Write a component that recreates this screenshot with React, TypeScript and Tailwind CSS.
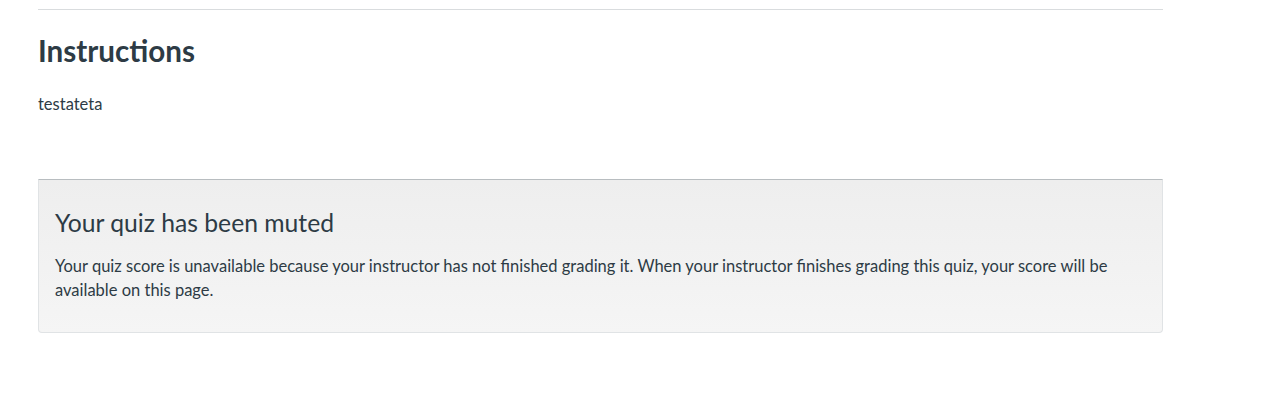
export default function App() {
  return (
    <div className="w-[1280px] h-[417px] bg-white text-[#2d3b45]" style={{ fontFamily: "Lato, 'Open Sans', sans-serif" }}>
      <div className="ml-[38px] w-[1125px] pt-[9px]">
        <div className="h-px bg-[#d9dcde]" />
        <h2 className="mt-[23px] text-[29.6px] leading-[36px] font-bold">Instructions</h2>
        <p className="mt-[23px] text-[16.5px] leading-[24px]">testateta</p>
        <div className="mt-[63px] rounded-b-[4px] border border-[#e0e3e5] border-t-[#b8bdc0] bg-gradient-to-b from-[#eeeeee] to-[#f5f5f5] px-[16px] pt-[28px] pb-[30px]">
          <h3 className="text-[24.7px] leading-[30px] font-normal">Your quiz has been muted</h3>
          <p className="mt-[16px] text-[16.5px] leading-[24px]">
            Your quiz score is unavailable because your instructor has not finished grading it. When your instructor finishes grading this quiz, your score will be available on this page.
          </p>
        </div>
      </div>
    </div>
  );
}
